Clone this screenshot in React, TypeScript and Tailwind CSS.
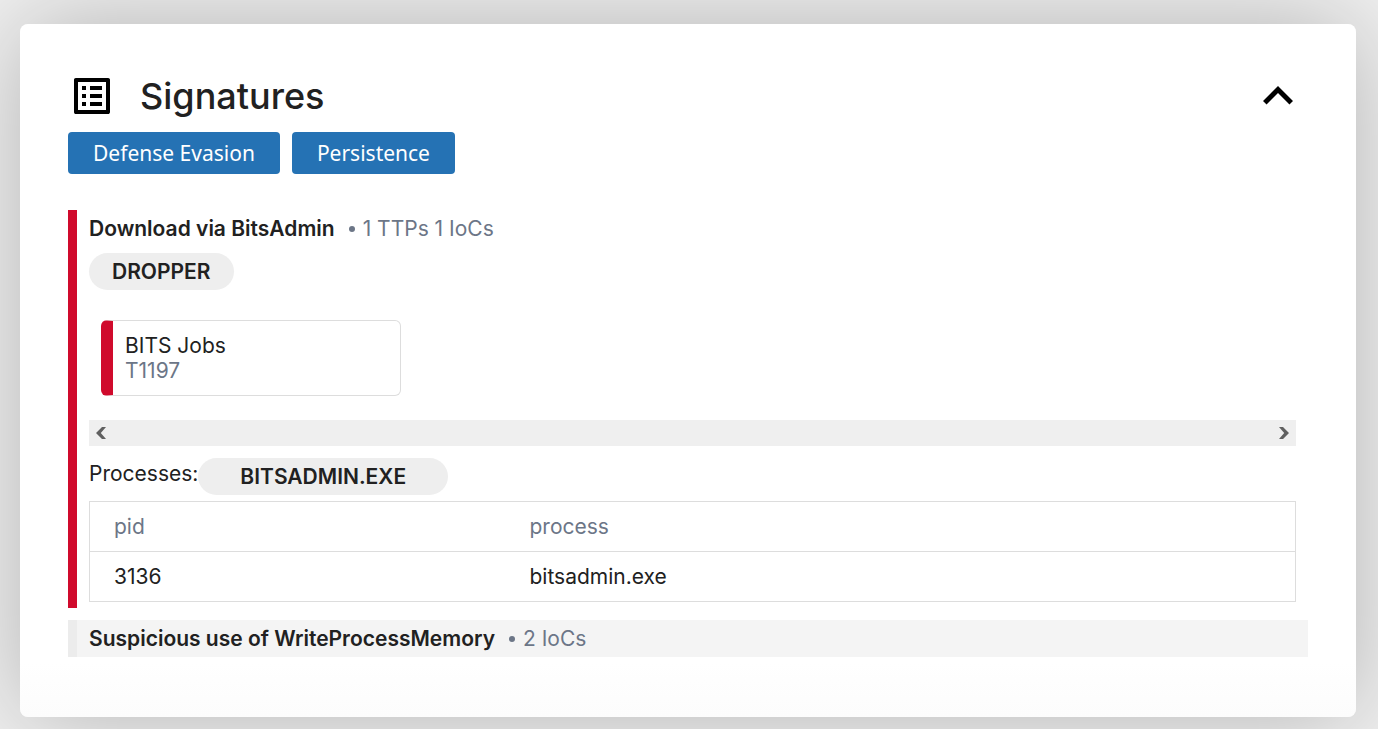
import React, { useState } from 'react';
import { MdExpandLess, MdListAlt } from 'react-icons/md';

interface ProcessRow {
  pid: number;
  process: string;
}

const TACTICS = ['Defense Evasion', 'Persistence'];

const PROCESSES: ProcessRow[] = [{ pid: 3136, process: 'bitsadmin.exe' }];

const SignatureTitle: React.FC<{ name: string; meta: string }> = ({ name, meta }) => (
  <h3 className="flex items-center leading-[37px]">
    <span className="font-semibold">{name}</span>
    <span className="ml-[14px] h-[6px] w-[6px] rounded-full bg-[#6c7687]"></span>
    <span className="ml-2 text-[#6c7687]">{meta}</span>
  </h3>
);

const ScrollArrow: React.FC<{ dir: 'left' | 'right' }> = ({ dir }) => (
  <button aria-label={`Scroll ${dir}`} className="flex h-[26px] w-6 items-center justify-center text-[#606060]">
    <svg viewBox="0 0 12 12" className="h-3 w-3" fill="currentColor">
      {dir === 'left'
        ? <path d="M7 0H11L5.8 6 11 12H7L1 6z" />
        : <path d="M5 0H1L6.2 6 1 12h4L11 6z" />}
    </svg>
  </button>
);

const App: React.FC = () => {
  const [open, setOpen] = useState(true);

  return (
    <div className="min-h-screen bg-[#f0f0f0] pt-6 pr-[22px] pb-3 pl-5 font-['Inter',sans-serif] text-[21px] text-[#212121]">
      <section className="rounded-lg bg-linear-to-t from-[#fcfcfc] to-white to-8% px-12 pt-[42px] pb-[60px] shadow-[0_0_100px_rgba(0,0,0,0.25)]">
        <header className="flex h-[60px] items-center">
          <MdListAlt className="h-12 w-12 text-black" />
          <h2 className="ml-6 text-4xl font-medium">Signatures</h2>
          <button
            onClick={() => setOpen(!open)}
            aria-label="Toggle signatures"
            aria-expanded={open}
            className="ml-auto text-black"
          >
            <MdExpandLess className={open ? 'h-[60px] w-[60px]' : 'h-[60px] w-[60px] rotate-180'} />
          </button>
        </header>

        {open && (
          <>
            {/* Tactic filters */}
            <div className="mt-[6px] flex flex-wrap gap-3">
              {TACTICS.map((tactic) => (
                <button
                  key={tactic}
                  className="h-[42px] rounded bg-[#2572b4] px-[25px] font-['Noto_Sans',sans-serif] leading-[42px] text-white"
                >
                  {tactic}
                </button>
              ))}
            </div>

            <article className="mt-9 border-l-[9px] border-[#d00a2c] px-3 pb-[6px]">
              <SignatureTitle name="Download via BitsAdmin" meta="1 TTPs 1 IoCs" />
              <div className="mt-[6px] flex">
                <span className="rounded-full bg-[#eeeeee] px-[23px] leading-[37px] font-semibold">DROPPER</span>
              </div>

              <div className="mx-3 mt-[30px] w-[300px] max-w-full rounded-md border border-[#dddddd] border-l-[12px] border-l-[#d00a2c] px-3 py-3 leading-[25px]">
                <p>BITS Jobs</p>
                <p className="text-[#6c7687]">T1197</p>
              </div>

              {/* Horizontal scroll track */}
              <div className="mt-6 flex justify-between bg-[#efefef]">
                <ScrollArrow dir="left" />
                <ScrollArrow dir="right" />
              </div>

              <div className="mt-3 flex">
                <span className="leading-8">Processes:</span>
                <span className="rounded-full bg-[#eeeeee] px-[42px] leading-[37px] font-semibold">BITSADMIN.EXE</span>
              </div>

              <table className="mt-[6px] w-full table-fixed border-collapse border border-[#dddddd] text-left">
                <thead>
                  <tr className="h-[50px] border-b border-[#dddddd] text-[#6c7687]">
                    <th className="w-[416px] px-6 font-normal">pid</th>
                    <th className="px-6 font-normal">process</th>
                  </tr>
                </thead>
                <tbody>
                  {PROCESSES.map((row) => (
                    <tr key={row.pid} className="h-[50px]">
                      <td className="px-6">{row.pid}</td>
                      <td className="px-6">{row.process}</td>
                    </tr>
                  ))}
                </tbody>
              </table>
            </article>

            <article className="mt-3 border-l-[9px] border-[#ececec] bg-[#f4f4f4] px-3">
              <SignatureTitle name="Suspicious use of WriteProcessMemory" meta="2 IoCs" />
            </article>
          </>
        )}
      </section>
    </div>
  );
};

export default App;
